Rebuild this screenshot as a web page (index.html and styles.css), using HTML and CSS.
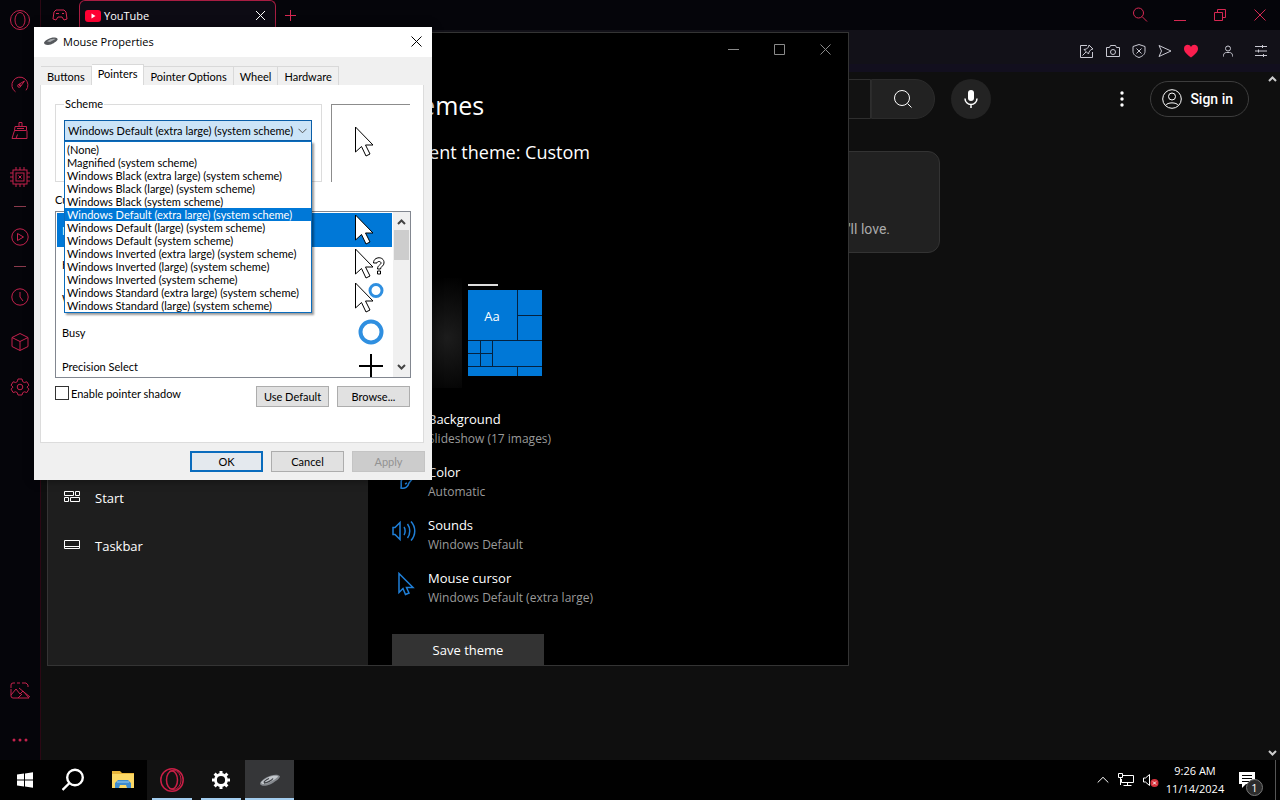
FILE: index.html
```html
<!DOCTYPE html>
<html lang="en">
<head>
  <meta charset="UTF-8">
  <meta name="viewport" content="width=device-width, initial-scale=1.0">
  <title>Mouse Properties</title>
  <link rel="stylesheet" href="styles.css">
</head>
<body>
  <div class="desktop">

    <!-- Browser -->
    <div class="browser">
      <aside class="rail">
        <button class="rail-btn logo" aria-label="Opera menu">
          <svg width="22" height="22" viewBox="0 0 22 22"><circle cx="11" cy="11" r="9.500"/><ellipse cx="11" cy="11" rx="5" ry="7.500"/></svg>
        </button>
        <div class="rail-group">
          <button class="rail-btn" aria-label="GX Control">
            <svg width="20" height="20" viewBox="0 0 20 20"><path d="M5.500 16.800A8 8 0 1 1 16 15.300M14.500 6l-6 3.500 2 2z"/><circle cx="9.200" cy="10.800" r="1.500"/></svg>
          </button>
          <button class="rail-btn" aria-label="GX Cleaner">
            <svg width="20" height="20" viewBox="0 0 20 20"><path d="M9 5.500V1.500h3v4M5 5.500h11.500v4H4.500zM4.500 9.500L2 17.500h15v-8M6 17.500l1.500-4M7 7.500h7"/></svg>
          </button>
          <button class="rail-btn" aria-label="GX Limiter">
            <svg width="20" height="20" viewBox="0 0 20 20"><rect x="3" y="3" width="14" height="14"/><rect x="6" y="6" width="8" height="8"/><path d="M6 3V0M10 3V0M14 3V0M6 20v-3M10 20v-3M14 20v-3M3 6H0M3 10H0M3 14H0M20 6h-3M20 10h-3M20 14h-3M8.500 8.500l3 3M11.500 8.500l-3 3"/></svg>
          </button>
        </div>
        <hr class="rail-sep">
        <button class="rail-btn" aria-label="Player">
          <svg width="20" height="20" viewBox="0 0 20 20"><circle cx="10" cy="10" r="8.200"/><path d="M7.500 6.500v7l6-3.500z"/></svg>
        </button>
        <hr class="rail-sep">
        <div class="rail-group tight">
          <button class="rail-btn" aria-label="History">
            <svg width="20" height="20" viewBox="0 0 20 20"><circle cx="10" cy="10" r="8.200"/><path d="M10 5v5l3 4"/></svg>
          </button>
          <button class="rail-btn" aria-label="Extensions">
            <svg width="20" height="20" viewBox="0 0 20 20"><path d="M10 1.500l8 4v9l-8 4-8-4v-9zM2 5.500l8 4 8-4M10 9.500v9"/></svg>
          </button>
          <button class="rail-btn" aria-label="Settings">
            <svg width="20" height="20" viewBox="0 0 20 20"><path d="M8 2h4l.7 2.600 1.600.9 2.600-.7 2 3.400-1.900 1.900 1.900 2-2 3.400-2.600-.7-1.600.9L12 18H8l-.7-2.300-1.600-.9-2.600.7-2-3.400 1.900-2-1.900-1.900 2-3.400 2.600.7 1.600-.9z"/><circle cx="10" cy="10" r="2.800"/></svg>
          </button>
        </div>
        <div class="rail-group bottom">
          <button class="rail-btn" aria-label="Wallpaper">
            <svg width="22" height="20" viewBox="0 0 22 20"><path d="M2 7V4a2 2 0 0 1 2-2h2M8 2h3M13 2h4l2 2v2M2 8v7a2 2 0 0 0 2 2h16l-6-7-3 3-4-5-5 6M10 7l11 9M9 17l4-4"/></svg>
          </button>
          <button class="rail-btn" aria-label="More">
            <svg class="solid" width="18" height="4" viewBox="0 0 18 4"><circle cx="3" cy="2" r="1.500"/><circle cx="9" cy="2" r="1.500"/><circle cx="15" cy="2" r="1.500"/></svg>
          </button>
        </div>
      </aside>

      <div class="browser-main">
        <div class="tabbar">
          <button class="gx-corner" aria-label="GX Corner">
            <svg width="16" height="12" viewBox="0 0 16 12"><path d="M4 1h8l2 2 1 7-3 1-2-3H6l-2 3-3-1 1-7zM4 4.500h3M10 4.500h2"/></svg>
          </button>
          <div class="tab">
            <svg width="16" height="12" viewBox="0 0 16 12"><rect width="16" height="12" rx="3" fill="#ff0033"/><path d="M6.500 3.500v5l4-2.500z" fill="#fff"/></svg>
            <span class="tab-title">YouTube</span>
            <button class="tab-close" aria-label="Close tab">
              <svg width="11" height="11" viewBox="0 0 11 11"><path d="M1 1l9 9M10 1l-9 9"/></svg>
            </button>
          </div>
          <button class="new-tab" aria-label="New tab">
            <svg width="11" height="11" viewBox="0 0 11 11"><path d="M5.500 0v11M0 5.500h11"/></svg>
          </button>
          <div class="win-controls">
            <button aria-label="Search tabs"><svg width="16" height="16" viewBox="0 0 16 16"><circle cx="6.500" cy="6" r="5"/><path d="M10 9.500l5 5"/></svg></button>
            <button aria-label="Minimize"><svg width="16" height="16" viewBox="0 0 16 16"><path d="M2 13.500h12"/></svg></button>
            <button aria-label="Restore"><svg width="16" height="16" viewBox="0 0 16 16"><path d="M2.500 5.500h8v8h-8zM5.500 5.500v-3h8v8h-3"/></svg></button>
            <button aria-label="Close"><svg width="16" height="16" viewBox="0 0 16 16"><path d="M2.500 2.500l11 11M13.500 2.500l-11 11"/></svg></button>
          </div>
        </div>

        <div class="toolbar">
          <button aria-label="Pin"><svg width="16" height="16" viewBox="0 0 16 16"><path d="M8 2.500H1.500v12h12V9M10 2l4 4-2 .5-2 2.500-.5 2-4.500-4.500 2.500-.5L9.500 4zM7 9l-3.500 3.500"/></svg></button>
          <button aria-label="Snapshot"><svg width="16" height="16" viewBox="0 0 16 16"><path d="M1.500 4.500h3l1-2h5l1 2h3v9h-13z"/><circle cx="8" cy="9" r="2.500"/></svg></button>
          <button aria-label="Ad blocker"><svg width="16" height="16" viewBox="0 0 16 16"><path d="M8 1.500l6 2v5c0 3-3 5-6 6-3-1-6-3-6-6v-5zM5.500 5.500l5 5M10.500 5.500l-5 5"/></svg></button>
          <button aria-label="My Flow"><svg width="16" height="16" viewBox="0 0 16 16"><path d="M2 2.500L14 8 2 13.500 4.500 8z"/></svg></button>
          <button class="heart" aria-label="Pinboards"><svg width="16" height="16" viewBox="0 0 16 16"><path d="M8 14.500C2 10 1 8 1 5.500 1 1.500 6.500.5 8 4c1.500-3.500 7-2.500 7 1.500 0 2.500-1 4.500-7 9z"/></svg></button>
          <button class="profile" aria-label="Profile"><svg width="16" height="16" viewBox="0 0 16 16"><circle cx="8" cy="5.500" r="2.500"/><path d="M3.500 13.500v-1c0-2 1.500-3 3-3h3c1.500 0 3 1 3 3v1"/></svg></button>
          <button class="setup" aria-label="Easy setup"><svg width="16" height="16" viewBox="0 0 16 16"><path d="M2 3.500h12M2 8h12M2 12.500h12M9.500 2v3M5.500 6.500v3M10.500 11v3"/></svg></button>
        </div>

        <div class="page">
          <main class="youtube">
            <header class="yt-header">
              <form class="yt-search">
                <input type="text" class="yt-input" aria-label="Search">
                <button type="button" class="yt-go" aria-label="Search">
                  <svg width="20" height="20" viewBox="0 0 20 20"><circle cx="9" cy="9" r="7.500"/><path d="M14.500 14.500l4 4"/></svg>
                </button>
              </form>
              <button class="yt-mic" aria-label="Search with your voice">
                <svg width="16" height="20" viewBox="0 0 16 20"><rect x="5" y="1" width="6" height="11" rx="3" fill="#fff"/><path d="M2 9.500a6 6 0 0 0 12 0M8 15.500V19" fill="none" stroke="#fff" stroke-width="1.500"/></svg>
              </button>
              <div class="yt-end">
                <button class="yt-more" aria-label="Settings">
                  <svg width="4" height="16" viewBox="0 0 4 16"><circle cx="2" cy="2" r="1.700"/><circle cx="2" cy="8" r="1.700"/><circle cx="2" cy="14" r="1.700"/></svg>
                </button>
                <a class="yt-signin" href="#">
                  <svg width="20" height="20" viewBox="0 0 20 20"><circle cx="10" cy="10" r="9.300"/><circle cx="10" cy="7.500" r="3.500"/><path d="M3.500 16.500c2-3.500 11-3.500 13 0"/></svg>
                  Sign in
                </a>
              </div>
            </header>
            <section class="yt-card">
              <p>Start watching videos to help us build a feed of videos you'll love.</p>
            </section>
          </main>
          <div class="page-scroll">
            <svg width="9" height="6" viewBox="0 0 9 6"><path d="M1 5l3.500-3.500L8 5"/></svg>
            <svg width="9" height="6" viewBox="0 0 9 6"><path d="M1 1l3.500 3.500L8 1"/></svg>
          </div>
        </div>
      </div>
    </div>

    <!-- Taskbar -->
    <footer class="taskbar">
      <button class="task" aria-label="Start">
        <svg width="16" height="16" viewBox="0 0 16 16" fill="#fff"><path d="M0 2.500L7 1.500v6H0zM8 1.400L16 .2v7.300H8zM0 8.500h7v6l-7-1zM8 8.500h8v7.300l-8-1.200z"/></svg>
      </button>
      <button class="task" aria-label="Search">
        <svg width="24" height="24" viewBox="0 0 24 24" fill="none" stroke="#fff" stroke-width="2.400"><circle cx="13" cy="9.500" r="7.800"/><path d="M7.500 15L.5 22"/></svg>
      </button>
      <button class="task" aria-label="File Explorer">
        <svg width="22" height="20" viewBox="0 0 22 20"><path d="M0 1h8l2 2h12v15H0z" fill="#e9b53a"/><path d="M0 4h22v14H0z" fill="#fcd866"/><path d="M3 18v-5l3-3h10l3 3v5h-4l-1-3H8l-1 3z" fill="#3f8ccf"/><path d="M5 12h12" stroke="#7db8e8" stroke-width="1.500"/></svg>
      </button>
      <button class="task open" aria-label="Opera GX">
        <svg width="26" height="26" viewBox="0 0 26 26" fill="none" stroke="#c91f46" stroke-width="1.500"><circle cx="13" cy="13" r="11.200"/><ellipse cx="13" cy="13" rx="5.500" ry="9"/><path d="M10 4.500c8-4 12 3 12 8.500s-4 12-12 8.500" stroke-width="1"/></svg>
      </button>
      <button class="task open" aria-label="Settings">
        <svg width="20" height="20" viewBox="0 0 20 20" fill="none" stroke="#fff"><circle cx="10" cy="10" r="5.500" stroke-width="2.800"/><path d="M10 1v3M10 16v3M1 10h3M16 10h3M3.600 3.600l2.200 2.200M14.200 14.200l2.200 2.200M3.600 16.400l2.200-2.200M14.200 5.800l2.200-2.200" stroke-width="3"/></svg>
      </button>
      <button class="task active" aria-label="Mouse Properties">
        <svg width="22" height="14" viewBox="0 0 22 14"><path d="M1 11C1 8 7 4 12 2.500c4-1 8-1 9 1 0 2-6 6-10 8-4 1.500-9 2-10-.5z" fill="#85898e"/><path d="M2 9.500C4 7 9 4 13 3c3-.6 6-.5 6 .5s-5 4-9 6-7 2-8 0z" fill="#c3c7cc"/><path d="M5 10c3 0 8-3 9-4.500M5 9.500c0-1.500 3-3 5-4" fill="none" stroke="#3f4246" stroke-width="1.300"/></svg>
      </button>
      <div class="tray">
        <svg width="12" height="8" viewBox="0 0 12 8"><path d="M.7 6.500L6 1.300l5.300 5.200"/></svg>
        <svg width="16" height="14" viewBox="0 0 16 14"><path d="M5 2.500h10.500v7H3.500V6M9.500 9.500v3M5.500 12.500h8M.5.500h4v4h-4zM2.500 5v7"/></svg>
        <svg width="16" height="14" viewBox="0 0 16 14"><path d="M.5 5h2l4-3.500v11L2.500 9h-2z"/><circle cx="11.500" cy="10" r="4" fill="#d8323c" stroke="none"/><path d="M10 8.500l3 3M13 8.500l-3 3"/></svg>
      </div>
      <div class="clock">
        <time>9:26 AM</time>
        <time>11/14/2024</time>
      </div>
      <button class="notices" aria-label="Notifications">
        <svg width="16" height="16" viewBox="0 0 16 16"><path d="M0 0h16v12H7l-4 4v-4H0z" fill="#fff"/><path d="M3 3.500h10M3 6.500h10M3 9.500h7" stroke="#000"/></svg>
        <span class="notices-badge">1</span>
      </button>
    </footer>

    <!-- Settings window -->
    <section class="settings">
      <nav class="settings-nav">
        <a href="#">
          <svg width="16" height="14" viewBox="0 0 16 14"><path d="M.5.500h9v4h-9zM11.500.500h4v4h-4zM.500 6.500h4v4h-4zM6.500 6.500h9v4h-9z"/></svg>
          Start
        </a>
        <a href="#">
          <svg width="16" height="14" viewBox="0 0 16 14"><path d="M.5 1.500h15v8H.5zM.5 7.500h15"/></svg>
          Taskbar
        </a>
      </nav>
      <div class="settings-main">
        <div class="settings-controls">
          <button aria-label="Minimize"><svg width="11" height="11" viewBox="0 0 11 11"><path d="M0 5.500h11"/></svg></button>
          <button aria-label="Maximize"><svg width="11" height="11" viewBox="0 0 11 11"><path d="M.5.500h10v10H.5z"/></svg></button>
          <button aria-label="Close"><svg width="11" height="11" viewBox="0 0 11 11"><path d="M.5.500l10 10M10.500.500l-10 10"/></svg></button>
        </div>
        <div class="settings-content">
          <h1>Themes</h1>
          <h2>Current theme: Custom</h2>
          <div class="theme-preview">
            <svg class="tiles" width="75" height="92" viewBox="0 0 75 92">
              <path d="M0 0h30v2H0z" fill="#ddd"/>
              <path d="M0 6h74v86H0z" fill="#0078d7"/>
              <path d="M49.500 6v50.500M49.500 31.500H74M0 56.500h74M0 69.500h25M12.500 56.500v26M24.500 56.500v26M0 82.500h74M49.500 82.500V92" stroke="#04223f" fill="none"/>
              <text x="24" y="37" text-anchor="middle">Aa</text>
            </svg>
          </div>
          <ul class="theme-links">
            <li>
              <svg width="24" height="24" viewBox="0 0 24 24"><path d="M1 4h22v16H1zM1 16l7-7 8 8 4-4 3 3"/></svg>
              <a href="#">Background<small>Slideshow (17 images)</small></a>
            </li>
            <li>
              <svg width="24" height="24" viewBox="0 0 24 24"><path d="M10 13C12 7 16 4 23 3c0 6-3 11-6 14-1 4-4 6-8 5 1-3-1-6 1-9zM13 18l2-1"/></svg>
              <a href="#">Color<small>Automatic</small></a>
            </li>
            <li>
              <svg width="24" height="24" viewBox="0 0 24 24"><path d="M1 8.500h2l5-5v17l-5-5H1zM12 8c1.500 2 1.500 6 0 8M15.500 5c3 4 3 10 0 14M19 2.500c5 5.500 5 13.500 0 19"/></svg>
              <a href="#">Sounds<small>Windows Default</small></a>
            </li>
            <li>
              <svg width="24" height="24" viewBox="0 0 24 24"><path d="M7 1.500v19l4-4 2.500 6 3.500-1.500-2.500-5.500H21z"/></svg>
              <a href="#">Mouse cursor<small>Windows Default (extra large)</small></a>
            </li>
          </ul>
          <button class="save-theme">Save theme</button>
        </div>
      </div>
    </section>

    <!-- Mouse Properties dialog -->
    <section class="dialog" role="dialog" aria-labelledby="dialog-title">
      <div class="dialog-bar">
        <svg width="14" height="8" viewBox="0 0 14 8"><path d="M0 5.500C1 3 7 0 11 .5c3 .5 3 2 2 3S8 8 4 8C1 8 0 7 0 5.500z" fill="#55585c"/><path d="M3 4.500C6 2 9 1.500 11.500 2L6 5z" fill="#a5a8ac"/></svg>
        <span id="dialog-title">Mouse Properties</span>
        <button class="dialog-close" aria-label="Close">
          <svg width="11" height="11" viewBox="0 0 11 11"><path d="M.5.500l10 10M10.500.500l-10 10"/></svg>
        </button>
      </div>

      <div class="prop-tabs" role="tablist">
        <button role="tab">Buttons</button>
        <button role="tab" aria-selected="true" class="current">Pointers</button>
        <button role="tab">Pointer Options</button>
        <button role="tab">Wheel</button>
        <button role="tab">Hardware</button>
      </div>

      <div class="prop-panel">
        <div class="scheme-row">
          <fieldset class="scheme">
            <legend>Scheme</legend>
            <div class="combo">
              <select aria-label="Scheme">
                <option>Windows Default (extra large) (system scheme)</option>
              </select>
              <svg class="combo-arrow" width="9" height="6" viewBox="0 0 9 6"><path d="M.5.800l4 4 4-4"/></svg>
              <ul class="combo-list" role="listbox" aria-label="Scheme">
                <li role="option">(None)</li>
                <li role="option">Magnified (system scheme)</li>
                <li role="option">Windows Black (extra large) (system scheme)</li>
                <li role="option">Windows Black (large) (system scheme)</li>
                <li role="option">Windows Black (system scheme)</li>
                <li role="option" aria-selected="true" class="chosen">Windows Default (extra large) (system scheme)</li>
                <li role="option">Windows Default (large) (system scheme)</li>
                <li role="option">Windows Default (system scheme)</li>
                <li role="option">Windows Inverted (extra large) (system scheme)</li>
                <li role="option">Windows Inverted (large) (system scheme)</li>
                <li role="option">Windows Inverted (system scheme)</li>
                <li role="option">Windows Standard (extra large) (system scheme)</li>
                <li role="option">Windows Standard (large) (system scheme)</li>
              </ul>
            </div>
          </fieldset>
          <div class="pointer-preview">
            <svg class="arrow" width="32" height="32" viewBox="0 0 32 32"><path d="M1.500 1v25l6-5.500 4.500 9.500 4-2-4.500-9H19z"/></svg>
          </div>
        </div>

        <span class="customize" id="customize">Customize:</span>
        <div class="pointer-box">
          <ul class="pointer-list" aria-labelledby="customize">
            <li class="chosen">Normal Select
              <svg class="arrow" width="32" height="32" viewBox="0 0 32 32"><path d="M1.500 1v25l6-5.500 4.500 9.500 4-2-4.500-9H19z"/></svg>
            </li>
            <li>Help Select
              <svg class="arrow" width="32" height="32" viewBox="0 0 32 32"><path d="M1.500 1v25l6-5.500 4.500 9.500 4-2-4.500-9H19z"/><path d="M19.500 15c0-7 11-7 10.500 0 0 3-3.500 3.500-3.500 6h-3c0-4 3.500-4 3.500-6 0-2-4-2-4 0zM23.500 23h3v3h-3z"/></svg>
            </li>
            <li>Working In Background
              <svg class="arrow" width="32" height="32" viewBox="0 0 32 32"><path d="M1.500 1v25l6-5.500 4.500 9.500 4-2-4.500-9H19z"/><circle class="ring" cx="22" cy="8.500" r="6"/></svg>
            </li>
            <li>Busy
              <svg width="32" height="32" viewBox="0 0 32 32"><circle class="ring big" cx="17" cy="16" r="10.500"/></svg>
            </li>
            <li>Precision Select
              <svg width="32" height="32" viewBox="0 0 32 32"><path d="M17 4v24M5 16h24" stroke="#000" stroke-width="2"/></svg>
            </li>
          </ul>
          <div class="list-scroll">
            <svg width="9" height="6" viewBox="0 0 9 6"><path d="M1 5l3.500-3.500L8 5"/></svg>
            <div class="list-thumb"></div>
            <svg width="9" height="6" viewBox="0 0 9 6"><path d="M1 1l3.500 3.500L8 1"/></svg>
          </div>
        </div>

        <div class="panel-foot">
          <label><input type="checkbox"> Enable pointer shadow</label>
          <button class="btn">Use Default</button>
          <button class="btn">Browse...</button>
        </div>
      </div>

      <div class="dialog-foot">
        <button class="btn ok">OK</button>
        <button class="btn">Cancel</button>
        <button class="btn" disabled>Apply</button>
      </div>
    </section>

    <svg class="arrow mouse" width="32" height="32" viewBox="0 0 32 32"><path d="M1.500 1v25l6-5.500 4.500 9.500 4-2-4.500-9H19z"/></svg>
  </div>
</body>
</html>
```

FILE: styles.css
```css
* {
  box-sizing: border-box;
}
body {
  margin: 0;
  background: #000;
  color: #fff;
  font-family: "Open Sans", "Noto Sans", sans-serif;
  font-size: 13px;
}
button {
  font: inherit;
  color: inherit;
  background: none;
  border: none;
  padding: 0;
}
svg {
  display: block;
  flex: none;
}
ul {
  list-style: none;
  margin: 0;
  padding: 0;
}
a {
  color: inherit;
  text-decoration: none;
}
.desktop {
  position: relative;
  display: flex;
  flex-direction: column;
  height: 100vh;
  overflow: hidden;
}

/* Browser */
.browser {
  flex: 1;
  display: flex;
  min-height: 0;
}
.rail {
  width: 41px;
  padding: 8px 0;
  background: #05050a;
  display: flex;
  flex-direction: column;
  align-items: center;
  border-right: 1px solid #2c0814;
}
.rail-btn {
  width: 24px;
  height: 24px;
  display: flex;
  align-items: center;
  justify-content: center;
}
.rail svg {
  fill: none;
  stroke: #c4224d;
}
.rail svg.solid {
  fill: #c4224d;
  stroke: none;
}
.rail-group {
  display: flex;
  flex-direction: column;
  gap: 22px;
}
.rail-group.tight {
  gap: 21px;
}
.rail-group.bottom {
  margin-top: auto;
  gap: 25px;
}
.logo {
  margin-bottom: 41px;
}
.rail-sep {
  width: 12px;
  height: 1px;
  margin: 17px 0 18px;
  border: none;
  background: #8a3a4c;
}
.browser-main {
  flex: 1;
  display: flex;
  flex-direction: column;
  min-width: 0;
}
.tabbar {
  height: 30px;
  background: #05050a;
  display: flex;
  align-items: center;
}
.gx-corner {
  width: 38px;
  display: flex;
  justify-content: center;
}
.gx-corner svg,
.new-tab svg,
.win-controls svg {
  fill: none;
  stroke: #d62852;
}
.tab {
  width: 197px;
  height: 30px;
  padding: 0 9px 0 5px;
  display: flex;
  align-items: center;
  gap: 3px;
  background: #0d0b14;
  border: 1px solid #a81d42;
  border-bottom: none;
  border-radius: 6px 6px 0 0;
}
.tab-title {
  flex: 1;
  font-size: 11px;
}
.tab-close svg {
  fill: none;
  stroke: #fff;
}
.new-tab {
  margin-left: 9px;
}
.win-controls {
  margin-left: auto;
  display: flex;
}
.win-controls button {
  width: 40px;
  display: flex;
  justify-content: center;
}
.toolbar {
  height: 42px;
  padding: 0 6px;
  background: linear-gradient(#121118 34px, #120f1e 34px);
  display: flex;
  align-items: center;
  justify-content: flex-end;
}
.toolbar button {
  width: 26px;
  display: flex;
  justify-content: center;
}
.toolbar svg {
  fill: none;
  stroke: #c9c9d2;
}
.toolbar .heart svg {
  fill: #fa1e4e;
  stroke: none;
}
.toolbar .profile {
  margin-left: 11px;
}
.toolbar .setup {
  margin-left: 7px;
}
.page {
  flex: 1;
  display: flex;
  background: #0f0f0f;
}
.youtube {
  flex: 1;
  font-family: Roboto, "Open Sans", sans-serif;
}
.yt-header {
  display: flex;
  align-items: center;
  padding: 7px 16px 7px 354px;
}
.yt-search {
  flex: 0 1 540px;
  height: 40px;
  display: flex;
}
.yt-input {
  flex: 1;
  min-width: 0;
  background: #121212;
  border: 1px solid #2e2e2e;
  border-radius: 20px 0 0 20px;
}
.yt-go {
  width: 64px;
  display: flex;
  align-items: center;
  justify-content: center;
  background: #222;
  border: 1px solid #2b2b2b;
  border-radius: 0 20px 20px 0;
}
.yt-go svg,
.yt-signin svg {
  fill: none;
  stroke: #fff;
}
.yt-mic {
  width: 40px;
  height: 40px;
  margin-left: 16px;
  display: flex;
  align-items: center;
  justify-content: center;
  background: #232323;
  border-radius: 50%;
}
.yt-end {
  flex: 1;
  display: flex;
  justify-content: flex-end;
  align-items: center;
  gap: 16px;
}
.yt-more {
  width: 24px;
  display: flex;
  justify-content: center;
}
.yt-more svg {
  fill: #fff;
}
.yt-signin {
  display: flex;
  align-items: center;
  gap: 8px;
  height: 36px;
  padding: 0 15px 0 11px;
  border: 1px solid #3d3d3d;
  border-radius: 18px;
  font-size: 14px;
  font-weight: 500;
}
.yt-card {
  max-width: 574px;
  height: 102px;
  margin: 25px auto 0;
  padding: 16px 49px;
  display: flex;
  flex-direction: column;
  justify-content: flex-end;
  background: #212121;
  border: 1px solid #333;
  border-radius: 12px;
  color: #aaa;
  font-size: 14px;
  line-height: 14px;
  text-align: right;
  white-space: nowrap;
}
.yt-card p {
  margin: 0;
}
.page-scroll {
  width: 15px;
  padding: 4px 0;
  display: flex;
  flex-direction: column;
  justify-content: space-between;
  align-items: center;
}
.page-scroll svg {
  fill: none;
  stroke: #ccc;
  stroke-width: 2;
}

/* Taskbar */
.taskbar {
  height: 40px;
  background: #010101;
  display: flex;
  padding-right: 4px;
}
.task {
  width: 49px;
  display: flex;
  align-items: center;
  justify-content: center;
}
.task.open {
  background: linear-gradient(#a3cdef, #a3cdef) center bottom / 40px 2px no-repeat #121212;
}
.task.active {
  background: linear-gradient(#a3cdef, #a3cdef) center bottom / 100% 2px no-repeat #353638;
}
.tray {
  margin-left: auto;
  display: flex;
  align-items: center;
  gap: 9px;
}
.tray svg {
  fill: none;
  stroke: #fff;
}
.clock {
  width: 72px;
  display: flex;
  flex-direction: column;
  justify-content: center;
  align-items: center;
  font-size: 11px;
  line-height: 18px;
}
.notices {
  position: relative;
  width: 45px;
  padding-left: 8px;
  border-right: 1px solid #555;
}
.notices-badge {
  position: absolute;
  left: 15px;
  top: 19px;
  width: 17px;
  height: 17px;
  border: 1px solid #777;
  border-radius: 50%;
  background: #2c2c2c;
  font-size: 11px;
  line-height: 15px;
  text-align: center;
}

/* Settings window */
.settings {
  position: absolute;
  left: 47px;
  top: 32px;
  width: 802px;
  height: 634px;
  display: flex;
  background: #000;
  border: 1px solid #343434;
  overflow: hidden;
}
.settings-nav {
  width: 320px;
  padding-bottom: 95px;
  background: #1e1e1e;
  display: flex;
  flex-direction: column;
  justify-content: flex-end;
}
.settings-nav a {
  height: 48px;
  padding-left: 16px;
  display: flex;
  align-items: center;
  gap: 15px;
}
.settings-nav svg {
  fill: none;
  stroke: #fff;
}
.settings-main {
  flex: 1;
  display: flex;
  flex-direction: column;
}
.settings-controls {
  display: flex;
  justify-content: flex-end;
}
.settings-controls button {
  width: 46px;
  height: 32px;
  display: flex;
  align-items: center;
  justify-content: center;
}
.settings-controls svg {
  fill: none;
  stroke: #8a8a8a;
}
.settings-content {
  padding: 24px 24px 0;
}
.settings-content h1 {
  margin: 0 0 18px;
  font-size: 25px;
  font-weight: 400;
  line-height: 32px;
}
.settings-content h2 {
  margin: 0;
  font-size: 18px;
  font-weight: 400;
  line-height: 26px;
}
.theme-preview {
  height: 113px;
  margin: 113px 0 19px;
  padding: 6px 0 0 76px;
  background: radial-gradient(ellipse at 55px 60px, #1c1c1c, #000 75%) left top / 70px 110px no-repeat;
}
.tiles text {
  fill: #fff;
  font-size: 13px;
}
.theme-links {
  display: flex;
  flex-direction: column;
  gap: 15px;
}
.theme-links li {
  display: flex;
  align-items: flex-start;
  gap: 12px;
}
.theme-links svg {
  margin-top: 3px;
  fill: none;
  stroke: #1f7fd8;
  stroke-width: 1.5;
}
.theme-links a {
  line-height: 19px;
}
.theme-links small {
  display: block;
  color: #9a9a9a;
  font-size: 12px;
}
.save-theme {
  width: 152px;
  height: 32px;
  margin-top: 27px;
  background: #333;
}

/* Mouse Properties dialog */
.dialog {
  position: absolute;
  left: 34px;
  top: 27px;
  width: 398px;
  background: #f0f0f0;
  color: #000;
  font-family: Lato, "Liberation Sans", sans-serif;
  font-size: 11px;
  box-shadow: 0 0 8px rgba(0, 0, 0, 0.5);
}
.dialog-bar {
  height: 30px;
  padding: 0 10px 2px;
  display: flex;
  align-items: center;
  gap: 5px;
  background: #fff;
  font-family: "Open Sans", "Noto Sans", sans-serif;
}
.dialog-close {
  margin-left: auto;
}
.dialog-close svg {
  stroke: #000;
}
.prop-tabs {
  display: flex;
  align-items: flex-end;
  height: 28px;
  padding-left: 7px;
}
.prop-tabs button {
  height: 19px;
  padding: 0 6px;
  background: #f0f0f0;
  border: 1px solid #d9d9d9;
  border-width: 1px 1px 0 0;
}
.prop-tabs .current {
  height: 21px;
  padding-bottom: 3px;
  background: #fff;
}
.prop-panel {
  margin: 0 8px 0 6px;
  padding: 13px 13px 35px 14px;
  background: #fff;
  border: 1px solid #dcdcdc;
  border-top: none;
}
.scheme-row {
  display: flex;
  gap: 9px;
}
.scheme {
  flex: 1;
  min-width: 0;
  height: 84px;
  margin: 0;
  padding: 10px 9px 0 8px;
  border: 1px solid #dcdcdc;
}
.scheme legend {
  padding: 0 1px;
  line-height: 12px;
}
.combo {
  position: relative;
}
.combo select {
  display: block;
  width: 100%;
  height: 21px;
  padding: 0 3px;
  appearance: none;
  background: #cce4f7;
  border: 1px solid #0a5ea8;
  border-radius: 0;
  color: #000;
  font: inherit;
}
.combo-arrow {
  position: absolute;
  right: 5px;
  top: 8px;
  fill: none;
  stroke: #555;
}
.combo-list {
  position: absolute;
  z-index: 1;
  top: 21px;
  left: 0;
  right: 0;
  padding-top: 1px;
  background: #fff;
  border: 1px solid #0a6cbd;
  box-shadow: 2px 2px 2px rgba(0, 0, 0, 0.4);
}
.combo-list li {
  padding-left: 2px;
  line-height: 13px;
  white-space: nowrap;
}
.combo-list .chosen,
.pointer-list .chosen {
  background: #0078d7;
  color: #fff;
}
.pointer-preview {
  width: 79px;
  height: 78px;
  margin-top: 6px;
  padding: 21px 0 0 22px;
  border: 1px solid #8c8c8c;
  border-width: 1px 0 0 1px;
}
.arrow path {
  fill: #fff;
  stroke: #000;
}
.ring {
  fill: #fff;
  stroke: #2f8fe0;
  stroke-width: 3;
}
.ring.big {
  stroke-width: 4;
}
.customize {
  display: block;
  margin: 11px 0 4px;
  line-height: 14px;
}
.pointer-box {
  display: flex;
  height: 167px;
  margin-right: -1px;
  border: 1px solid #828790;
  overflow: hidden;
}
.pointer-list {
  flex: 1;
  padding: 1px 1px 0 1px;
}
.pointer-list li {
  height: 34px;
  padding: 0 6px 0 5px;
  display: flex;
  align-items: center;
  justify-content: space-between;
}
.list-scroll {
  width: 17px;
  padding: 7px 0;
  display: flex;
  flex-direction: column;
  align-items: center;
  background: #f0f0f0;
}
.list-scroll svg {
  fill: none;
  stroke: #444;
  stroke-width: 2;
}
.list-thumb {
  width: 15px;
  height: 30px;
  margin: 5px 0 auto;
  background: #cdcdcd;
}
.panel-foot {
  display: flex;
  align-items: flex-start;
  gap: 8px;
  margin-top: 8px;
}
.panel-foot label {
  margin-right: auto;
  display: flex;
  align-items: center;
  gap: 2px;
}
.panel-foot input {
  width: 14px;
  height: 14px;
  margin: 0;
  appearance: none;
  background: #fff;
  border: 1px solid #333;
}
.btn {
  width: 73px;
  height: 21px;
  background: #e1e1e1;
  border: 1px solid #adadad;
}
.btn.ok {
  border: 2px solid #0a6cbd;
  background: #e4e9ee;
}
.btn:disabled {
  background: #ccc;
  border-color: #c4c4c4;
  color: #929292;
}
.dialog-foot {
  display: flex;
  justify-content: flex-end;
  gap: 8px;
  padding: 8px 7px 8px;
}

.mouse {
  position: absolute;
  left: 196px;
  top: 218px;
}
```
